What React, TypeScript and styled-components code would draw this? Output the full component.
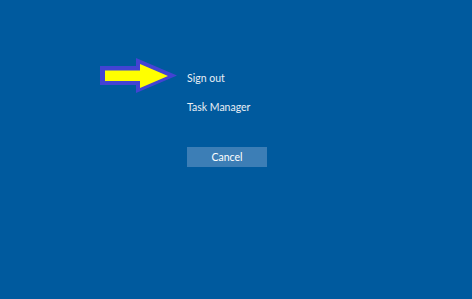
import React from "react";
import styled, { createGlobalStyle } from "styled-components";

const Global = createGlobalStyle`
  html, body { margin: 0; padding: 0; background: #005a9e; }
  body { font-family: "Lato", "Open Sans", sans-serif; }
`;

const Screen = styled.div`
  position: relative;
  width: 472px;
  height: 299px;
  background: #005a9e;
  overflow: hidden;
  display: flex;
  flex-direction: column;
  align-items: flex-start;
  padding: 71px 0 0 187px;
  box-sizing: border-box;
`;

const Options = styled.div`
  display: flex;
  flex-direction: column;
  gap: 14px;
`;

const Option = styled.div`
  font-size: 10.5px;
  line-height: 15px;
  color: #e8eef5;
  white-space: nowrap;
`;

const CancelButton = styled.button`
  margin-top: 32px;
  width: 80px;
  height: 20px;
  border: none;
  padding: 0;
  background: #3c7eb6;
  color: #ffffff;
  font-family: "Lato", "Open Sans", sans-serif;
  font-size: 10.5px;
  line-height: 20px;
  text-align: center;
`;

const Arrow = styled.svg`
  position: absolute;
  left: 0;
  top: 0;
  pointer-events: none;
`;

export default function App() {
  return (
    <>
      <Global />
      <Screen>
        <Options>
          <Option>Sign out</Option>
          <Option>Task Manager</Option>
        </Options>
        <CancelButton>Cancel</CancelButton>
        <Arrow width="472" height="299" viewBox="0 0 472 299">
          <polygon
            points="100,66 136,66 136,58 177,75.5 136,93 136,85 100,85"
            fill="#4343d3"
          />
          <polygon
            points="105,70.5 140,70.5 140,64 168,76 140,88 140,81 105,81"
            fill="#ffff00"
          />
        </Arrow>
      </Screen>
    </>
  );
}
